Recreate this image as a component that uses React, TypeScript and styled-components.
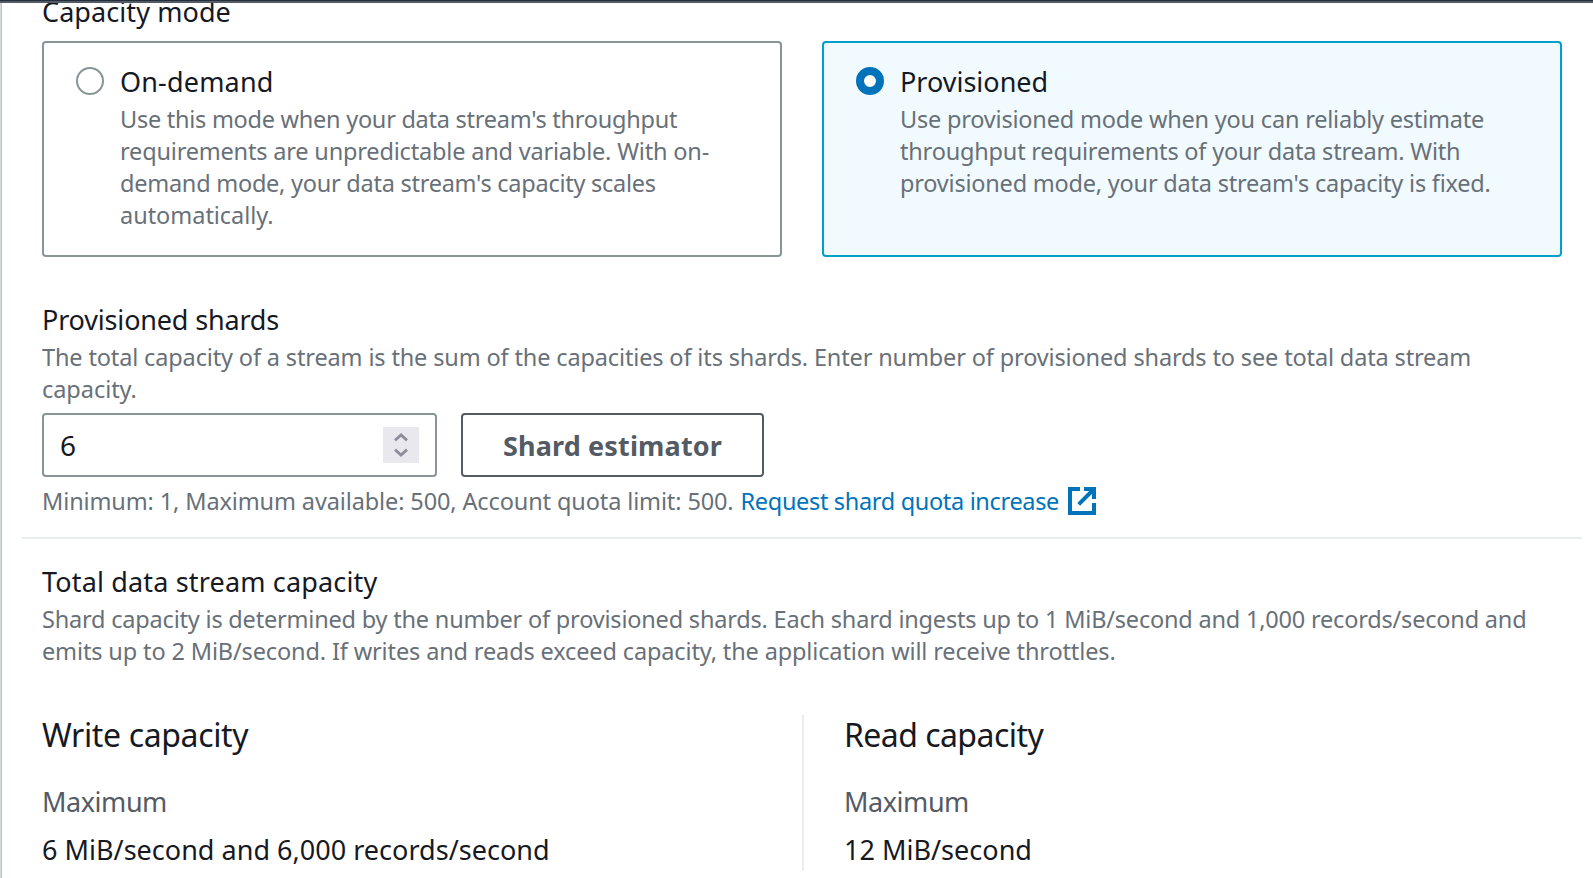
import React, { useState } from "react";
import styled, { createGlobalStyle, css } from "styled-components";

const GlobalStyle = createGlobalStyle`
  * { box-sizing: border-box; }
  body {
    margin: 0;
    background: #fff;
    color: #16191f;
    font-family: "Noto Sans", "Open Sans", sans-serif;
    overflow: hidden;
  }
`;

const Page = styled.div`
  display: flex;
  flex-direction: column;
  height: 878px;
  overflow: hidden;
`;

const TopBar = styled.div`
  flex: none;
  height: 3px;
  background: #545b64;
  border-top: 1px solid #232f3e;
  z-index: 1;
`;

const Panel = styled.main`
  flex: 1;
  min-height: 0;
  border-left: 1px solid #d5dbdb;
  box-shadow: inset 1px 0 0 #bcc3c6;
  padding-left: 21px;
  padding-right: 11px;
`;

const Section = styled.section<{ $top: number }>`
  padding: 0 20px;
  margin-top: ${(p) => p.$top}px;
`;

const Label = styled.h3<{ $tracking?: number }>`
  margin: 0;
  font-size: 27px;
  line-height: 36px;
  font-weight: 400;
  letter-spacing: ${(p) => p.$tracking ?? 0}px;
`;

const Hint = styled.div`
  margin-top: 3px;
  color: #687078;
  font-size: 23.5px;
  line-height: 32px;
`;

const Line = styled.span<{ $tracking?: number }>`
  display: block;
  white-space: nowrap;
  letter-spacing: ${(p) => p.$tracking ?? 0}px;
`;

const Tiles = styled.div`
  display: grid;
  grid-template-columns: 1fr 1fr;
  gap: 40px;
  margin-top: 11px;
`;

const Tile = styled.label<{ $selected: boolean }>`
  display: flex;
  gap: 16px;
  height: 216px;
  padding: 21px 32px;
  border: 2px solid #879596;
  border-radius: 4px;
  ${(p) =>
    p.$selected &&
    css`
      border-color: #00a1c9;
      background: #f1faff;
    `}
`;

const Radio = styled.input`
  appearance: none;
  flex: none;
  width: 28px;
  height: 28px;
  margin: 3px 0 0;
  border: 2px solid #879596;
  border-radius: 50%;
  background: #fff;
  &:checked {
    border: 8.5px solid #0073bb;
  }
`;

const Controls = styled.div`
  display: flex;
  gap: 24px;
  margin-top: 8px;
`;

const NumberField = styled.div`
  display: flex;
  align-items: center;
  justify-content: space-between;
  width: 395px;
  height: 64px;
  padding: 0 16px;
  border: 2px solid #879596;
  border-radius: 4px;
  font-size: 28px;
`;

const Stepper = styled.span`
  display: flex;
  width: 36px;
  height: 36px;
  background: #e9e8ee;
`;

const Button = styled.button`
  width: 303px;
  height: 64px;
  padding: 0;
  border: 2px solid #545b64;
  border-radius: 4px;
  background: #fff;
  color: #545b64;
  font: 700 27px "Noto Sans", sans-serif;
  letter-spacing: 0.14px;
`;

const Constraint = styled.div`
  display: flex;
  margin-top: 8px;
  color: #687078;
  font-size: 23.5px;
  line-height: 32px;
`;

const Link = styled.a`
  display: flex;
  margin-left: 7px;
  gap: 9px;
  color: #0073bb;
`;

const Divider = styled.hr`
  height: 2px;
  margin: 20px 0 0;
  border: 0;
  background: #eaeded;
`;

const Columns = styled.div`
  display: grid;
  grid-template-columns: 760px 1fr;
  height: 156px;
  margin-top: 48px;
`;

const Column = styled.div<{ $divided?: boolean }>`
  ${(p) =>
    p.$divided &&
    css`
      border-left: 2px solid #eaeded;
      padding-left: 40px;
    `}
`;

const Heading = styled.h2<{ $tracking: number }>`
  margin: 0;
  font-size: 32px;
  line-height: 40px;
  font-weight: 400;
  letter-spacing: ${(p) => p.$tracking}px;
`;

const Term = styled.div`
  margin-top: 29px;
  font-size: 27px;
  line-height: 36px;
  letter-spacing: -0.45px;
  color: #545b64;
`;

const Value = styled.div`
  margin-top: 12px;
  font-size: 27px;
  line-height: 36px;
  letter-spacing: 0.02px;
`;

const StepIcon = () => (
  <svg width="36" height="36" viewBox="0 0 36 36" fill="none" stroke="#8f8d9c" strokeWidth="2.8">
    <path d="M12 13.4 18 8 24 13.4M12 22.6 18 28 24 22.6" />
  </svg>
);

const ExternalIcon = () => (
  <svg width="28" height="32" viewBox="0 -2 28 32" fill="none" stroke="#0073bb" strokeWidth="4">
    <path d="M12 2H2V26H26V16" />
    <path d="M16 2H26V12M26 2 10.7 17.3" />
  </svg>
);

const modes = [
  {
    id: "on-demand",
    title: "On-demand",
    titleTracking: 0.17,
    lines: [
      { text: "Use this mode when your data stream's throughput", tracking: -0.26 },
      { text: "requirements are unpredictable and variable. With on-", tracking: -0.18 },
      { text: "demand mode, your data stream's capacity scales", tracking: -0.25 },
      { text: "automatically.", tracking: -0.03 },
    ],
  },
  {
    id: "provisioned",
    title: "Provisioned",
    titleTracking: 0,
    lines: [
      { text: "Use provisioned mode when you can reliably estimate", tracking: -0.2 },
      { text: "throughput requirements of your data stream. With", tracking: -0.2 },
      { text: "provisioned mode, your data stream's capacity is fixed.", tracking: -0.21 },
    ],
  },
];

export default function App() {
  const [mode, setMode] = useState("provisioned");
  return (
    <Page>
      <GlobalStyle />
      <TopBar />
      <Panel>
        <Section $top={-9}>
          <Label $tracking={0.08}>Capacity mode</Label>
          <Tiles>
            {modes.map((m) => (
              <Tile key={m.id} $selected={mode === m.id}>
                <Radio type="radio" name="mode" checked={mode === m.id} onChange={() => setMode(m.id)} />
                <div>
                  <Label $tracking={m.titleTracking}>{m.title}</Label>
                  <Hint>
                    {m.lines.map((l) => (
                      <Line key={l.text} $tracking={l.tracking}>{l.text}</Line>
                    ))}
                  </Hint>
                </div>
              </Tile>
            ))}
          </Tiles>
        </Section>
        <Section $top={45}>
          <Label $tracking={-0.17}>Provisioned shards</Label>
          <Hint>
            <Line $tracking={-0.14}>The total capacity of a stream is the sum of the capacities of its shards. Enter number of provisioned shards to see total data stream</Line>
            <Line $tracking={-0.05}>capacity.</Line>
          </Hint>
          <Controls>
            <NumberField>
              6
              <Stepper><StepIcon /></Stepper>
            </NumberField>
            <Button>Shard estimator</Button>
          </Controls>
          <Constraint>
            <Line $tracking={-0.12}>Minimum: 1, Maximum available: 500, Account quota limit: 500.</Line>
            <Link>
              <Line $tracking={-0.33}>Request shard quota increase</Line>
              <ExternalIcon />
            </Link>
          </Constraint>
        </Section>
        <Divider />
        <Section $top={25}>
          <Label $tracking={0.16}>Total data stream capacity</Label>
          <Hint>
            <Line $tracking={-0.194}>Shard capacity is determined by the number of provisioned shards. Each shard ingests up to 1 MiB/second and 1,000 records/second and</Line>
            <Line $tracking={-0.132}>emits up to 2 MiB/second. If writes and reads exceed capacity, the application will receive throttles.</Line>
          </Hint>
          <Columns>
            <Column>
              <Heading $tracking={-0.36}>Write capacity</Heading>
              <Term>Maximum</Term>
              <Value>6 MiB/second and 6,000 records/second</Value>
            </Column>
            <Column $divided>
              <Heading $tracking={-0.55}>Read capacity</Heading>
              <Term>Maximum</Term>
              <Value>12 MiB/second</Value>
            </Column>
          </Columns>
        </Section>
      </Panel>
    </Page>
  );
}
